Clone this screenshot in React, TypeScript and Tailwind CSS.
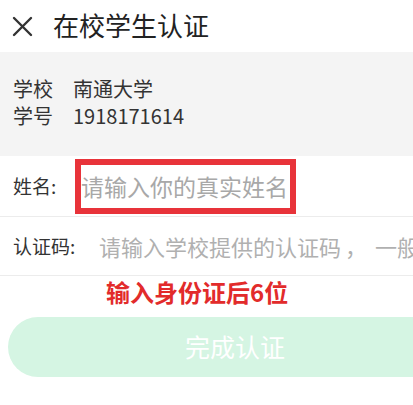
export default function App() {
  return (
    <div className="w-[413px] h-[405px] overflow-hidden bg-white font-['Noto_Sans_CJK_SC','Noto_Sans',sans-serif] text-[#333]">
      {/* top bar */}
      <div className="h-[52px] flex items-center pl-[12px]">
        <svg width="21" height="21" viewBox="0 0 21 21" className="shrink-0">
          <path d="M2 2 L19 19 M19 2 L2 19" stroke="#333" strokeWidth="2.4" strokeLinecap="round" />
        </svg>
        <div className="ml-[20px] -mt-[3px] text-[26px] leading-none text-[#222]">在校学生认证</div>
      </div>

      {/* school info */}
      <div className="h-[104px] bg-[#f4f4f4] pl-[13px] pt-[23px]">
        <div className="grid grid-cols-[60px_1fr] text-[20px] leading-[27px]">
          <span>学校</span>
          <span>南通大学</span>
          <span>学号</span>
          <span>1918171614</span>
        </div>
      </div>

      {/* name */}
      <div className="h-[61px] flex items-center pl-[13px] border-b border-[#ececec]">
        <span className="w-[62px] text-[19px]">姓名:</span>
        <div className="h-[55px] w-[221px] border-[6px] border-[#e8333a] flex items-center overflow-hidden">
          <span className="whitespace-nowrap text-[23px] text-[#a8a8a8] leading-none">请输入你的真实姓名</span>
        </div>
      </div>

      {/* auth code */}
      <div className="h-[59px] flex items-center pl-[13px] border-b border-[#ececec] overflow-hidden">
        <span className="w-[86px] shrink-0 text-[19px]">认证码:</span>
        <span className="whitespace-nowrap text-[22px] text-[#b0b0b0] leading-none">
          请输入学校提供的认证码<span className="ml-[4px] mr-[8px]">，</span>一般为身份证后6位
        </span>
      </div>

      <div className="h-[32px] flex items-center pl-[106px] text-[24px] font-semibold text-[#e22b2b] leading-none">
        输入身份证后6位
      </div>

      <div className="mt-[9px] ml-[8px] w-[454px] h-[60px] rounded-full bg-[#d5f5e3] flex items-center justify-center text-[25px] text-white">
        完成认证
      </div>
    </div>
  );
}
